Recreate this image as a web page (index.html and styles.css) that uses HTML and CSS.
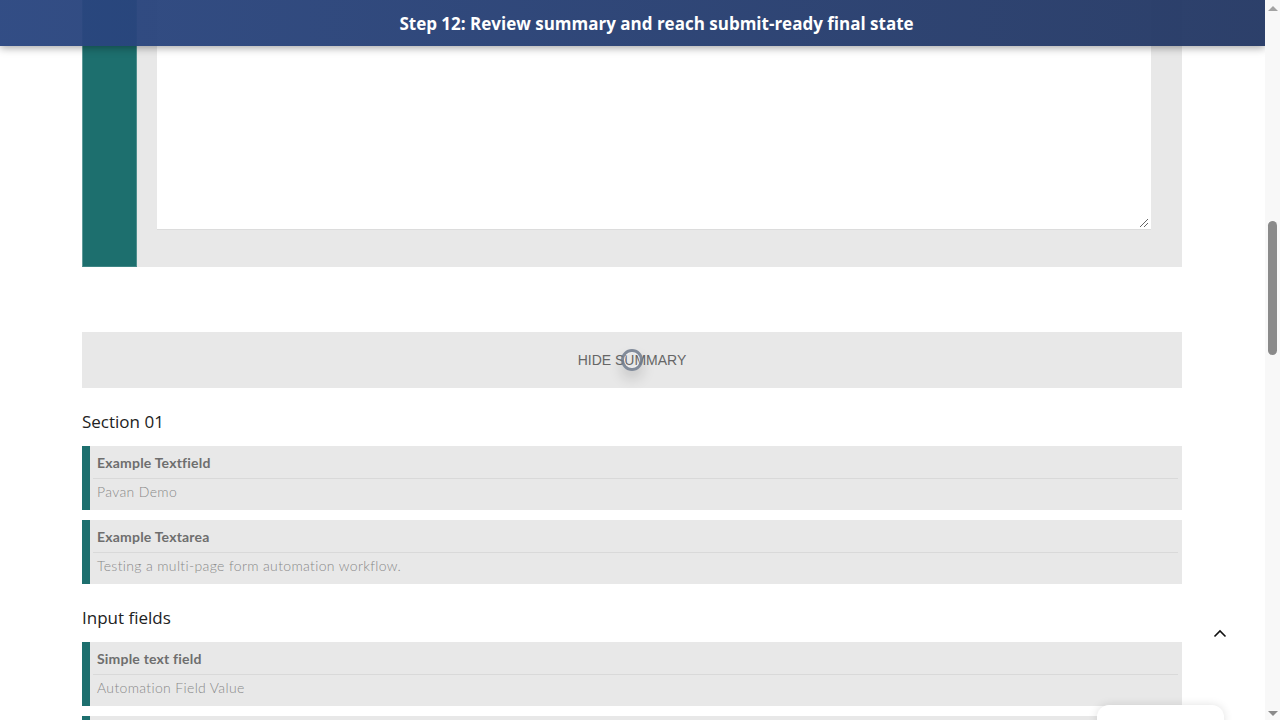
FILE: index.html
```html
<!DOCTYPE html>
<html lang="en">
<head>
<meta charset="utf-8">
<title>Form summary</title>
<link rel="stylesheet" href="styles.css">
</head>
<body>
<div class="frame">
  <div class="viewport">
    <div class="banner">Step 12: Review summary and reach submit-ready final state</div>
    <main class="content">
      <section class="page-card">
        <div class="page-bar"></div>
        <div class="page-body">
          <div class="textarea"><span class="grip"></span></div>
        </div>
      </section>

      <div class="summary-btn">
        <span class="btn-label">HIDE SUMMARY</span>
        <span class="click-ring"></span>
      </div>

      <h2 class="section-title">Section 01</h2>
      <div class="field">
        <div class="field-inner">
          <div class="field-label">Example Textfield</div>
          <div class="field-value">Pavan Demo</div>
        </div>
      </div>
      <div class="field">
        <div class="field-inner">
          <div class="field-label">Example Textarea</div>
          <div class="field-value">Testing a multi-page form automation workflow.</div>
        </div>
      </div>

      <h2 class="section-title">Input fields</h2>
      <div class="field">
        <div class="field-inner">
          <div class="field-label">Simple text field</div>
          <div class="field-value">Automation Field Value</div>
        </div>
      </div>
      <div class="field"></div>
    </main>
    <div class="to-top">
      <svg width="14" height="9" viewBox="0 0 14 9"><path d="M1.5 7.5 L7 2 L12.5 7.5" fill="none" stroke="#111" stroke-width="1.6"/></svg>
    </div>
    <div class="widget"></div>
  </div>
  <div class="scrollbar">
    <span class="arrow up"></span>
    <div class="track"><span class="thumb"></span></div>
    <span class="arrow down"></span>
  </div>
</div>
</body>
</html>
```

FILE: styles.css
```css
* { box-sizing: border-box; }
html, body { margin: 0; padding: 0; height: 100%; overflow: hidden; }
body { background: #fff; font-family: "Open Sans", "Noto Sans", sans-serif; color: #222; }

.frame { display: flex; width: 1280px; height: 720px; }
.viewport { width: 1265px; height: 720px; position: relative; overflow: hidden; }

.banner {
  position: absolute; top: 0; left: 0; right: 0; height: 46px; z-index: 5;
  background: linear-gradient(90deg, rgba(42,70,128,0.96), rgba(36,56,100,0.96));
  color: #fff; font-family: "Open Sans", "Noto Sans", sans-serif; font-weight: 700;
  font-size: 17px; line-height: 47px; text-align: center; padding-left: 48px;
  box-shadow: 0 2px 8px rgba(0,0,0,0.35);
}

.content { width: 1100px; margin-left: 82px; }

.page-card { display: flex; height: 267px; background: #e8e8e8; }
.page-bar { width: 55px; background: #1d6f6e; border-left: 1px solid #5f9a99; border-right: 1px solid #4e8e8d; border-bottom: 1px solid #3e8584; }
.page-body { flex: 1; padding: 0 31px 37px 20px; }
.textarea { height: 230px; background: #fff; border-bottom: 1px solid #dcdcdc; position: relative; }
.grip {
  position: absolute; right: 3px; bottom: 2px; width: 8px; height: 8px;
  background: linear-gradient(135deg, transparent 45%, #666 45%, #666 55%, transparent 55%, transparent 70%, #666 70%, #666 80%, transparent 80%);
}

.summary-btn {
  margin-top: 65px; height: 56px; background: #e8e8e8; position: relative;
  display: flex; align-items: center; justify-content: center;
  font-family: "Liberation Sans", Arial, sans-serif; font-size: 14px; color: #666;
}
.click-ring {
  position: absolute; left: 539px; top: 17px; width: 22px; height: 22px; border-radius: 50%;
  border: 3px solid rgba(110,122,140,0.85);
  box-shadow: 0 8px 14px rgba(0,0,0,0.14), 0 0 0 1px rgba(255,255,255,0.5) inset;
}

.section-title { margin: 22px 0 12px; font-size: 17px; line-height: 24px; font-weight: 400; color: #222; }

.field { background: #e8e8e8; border-left: 8px solid #1d6f6e; padding: 8px 4px 8px 3px; margin-bottom: 10px; height: 64px; }
.field-label {
  font-family: Lato, "Noto Sans", sans-serif; font-weight: 700; font-size: 14px; line-height: 18px;
  color: #6e6e6e; padding: 0 0 6px 4px; border-bottom: 1px solid #d9d9d9; letter-spacing: 0.2px;
}
.field-value {
  font-family: Lato, "Noto Sans", sans-serif; font-weight: 300; font-size: 14px; line-height: 20px;
  color: #888; padding: 3px 0 0 4px; letter-spacing: 0.35px;
}

.to-top { position: absolute; left: 1213px; top: 629px; width: 14px; height: 9px; display: flex; }
.widget {
  position: absolute; left: 1097px; top: 705px; width: 127px; height: 40px; background: #fff;
  border-radius: 12px; box-shadow: 0 0 10px rgba(0,0,0,0.12);
}

.scrollbar { width: 15px; height: 720px; background: #f8f8f8; display: flex; flex-direction: column; align-items: center; }
.arrow { width: 0; height: 0; border-left: 5px solid transparent; border-right: 5px solid transparent; margin: 4px 0; }
.arrow.up { border-bottom: 5px solid #a3a3a3; margin-top: 6px; }
.arrow.down { border-top: 5px solid #8a8a8a; margin-bottom: 4px; }
.track { flex: 1; width: 100%; position: relative; }
.thumb { position: absolute; left: 3px; top: 206px; width: 9px; height: 134px; border-radius: 5px; background: #8a8a8a; }
```
